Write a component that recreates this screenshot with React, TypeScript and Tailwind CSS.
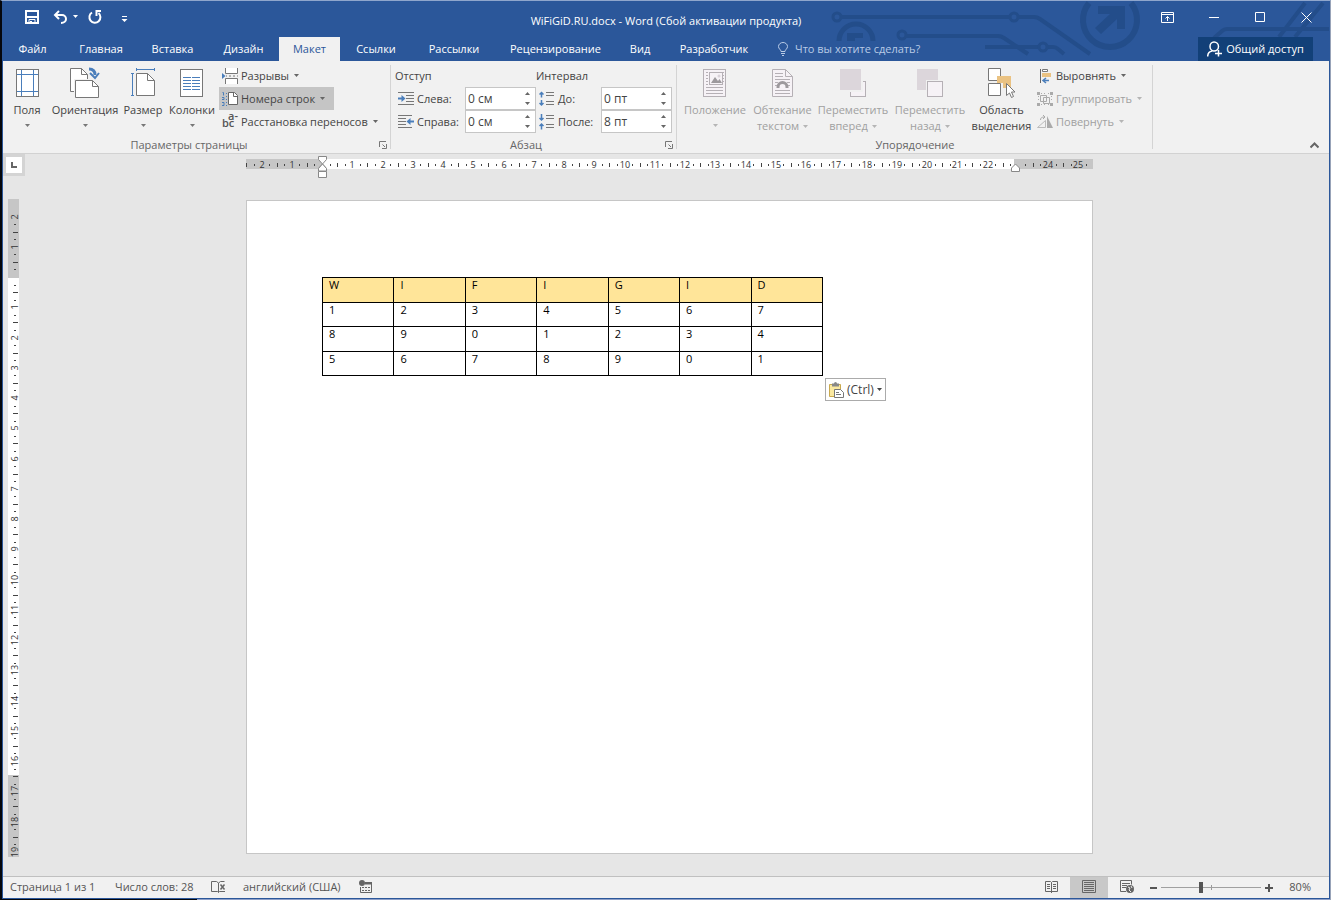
import { useState } from "react";
import type { ReactNode } from "react";
import clsx from "clsx";

const tabs = [
    { name: "Файл", width: "w-[59px] mr-[3px]" },
    { name: "Главная", width: "w-[72px]" },
    { name: "Вставка", width: "w-[71px]" },
    { name: "Дизайн", width: "w-[71px]" },
    { name: "Макет", width: "w-[61px]" },
    { name: "Ссылки", width: "w-[72px]" },
    { name: "Рассылки", width: "w-[84px]" },
    { name: "Рецензирование", width: "w-[119px]" },
    { name: "Вид", width: "w-[50px]" },
    { name: "Разработчик", width: "w-[98px]" },
];

const tableHead = ["W", "I", "F", "I", "G", "I", "D"];
const tableRows = [
    ["1", "2", "3", "4", "5", "6", "7"],
    ["8", "9", "0", "1", "2", "3", "4"],
    ["5", "6", "7", "8", "9", "0", "1"],
];

// Pixels per centimetre at 80% zoom
const CM = 30.25;

const Caret = ({ className }: { className?: string }) => (
    <svg className={clsx("shrink-0", className)} width="5" height="3" viewBox="0 0 5 3" fill="currentColor" aria-hidden="true">
        <path d="M0 0h5L2.5 3z" />
    </svg>
);

/* ---------- Large ribbon icons, 32x32 ---------- */

const BigIcon = ({ children }: { children: ReactNode }) => (
    <svg className="h-8 w-8 shrink-0" viewBox="0 0 32 32" fill="none" aria-hidden="true">{children}</svg>
);

const MarginsIcon = () => (
    <BigIcon>
        <rect x="5.500" y="3.500" width="22" height="27" fill="#fff" stroke="#777" />
        <path d="M10.500 4v26M22.500 4v26M6 8.500h21M6 25.500h21" stroke="#4a7ebb" />
    </BigIcon>
);

const OrientationIcon = () => (
    <BigIcon>
        <path d="M1.500 2.500h11l6 6v17h-17z" fill="#fff" stroke="#777" />
        <path d="M12.500 2.500v6h6" stroke="#777" />
        <path d="M5 13h27v19h-27z" fill="#f1f1f1" />
        <path d="M6.500 14.500h17l6 6v11h-23z" fill="#fff" stroke="#777" />
        <path d="M23.500 14.500v6h6" stroke="#777" />
        <path d="M20 3c4 0 6 2 6 6" stroke="#4a7ebb" strokeWidth="3" />
        <path d="M21 7l5 5 4-5" stroke="#4a7ebb" strokeWidth="2" />
    </BigIcon>
);

const SizeIcon = () => (
    <BigIcon>
        <path d="M9 3.500h19M9.500 2v3M27.500 2v3M5.500 7v22M4 7.500h3M4 29.500h3" stroke="#4a7ebb" />
        <path d="M9.500 7.500h11l7 7v15h-18z" fill="#fff" stroke="#777" />
        <path d="M20.500 7.500v7h7" stroke="#777" />
    </BigIcon>
);

const ColumnsIcon = () => (
    <BigIcon>
        <rect x="4.500" y="3.500" width="22" height="27" fill="#fff" stroke="#777" />
        <path d="M7 11.500h8M16 11.500h8M7 14.500h8M16 14.500h8M7 17.500h8M16 17.500h8M7 20.500h8M16 20.500h8M7 23.500h8M16 23.500h8" stroke="#4a7ebb" />
    </BigIcon>
);

const PositionIcon = () => (
    <BigIcon>
        <rect x="4.500" y="3.500" width="22" height="27" fill="#f6f2f6" stroke="#b5b0b5" />
        <path d="M7 6.500h2M7 9.500h2M7 12.500h2M7 15.500h2M7 18.500h2M22 18.500h2M22 6.500h3M22 9.500h3M22 12.500h3M22 15.500h3M7 21.500h17M7 24.500h17M7 27.500h17" stroke="#b5b0b5" />
        <rect x="10.500" y="6.500" width="13" height="12" fill="#f6f2f6" stroke="#b5b0b5" />
        <path d="M12 17l4-6 3 4 1.500-2 2.500 4z" fill="#9d999d" />
        <circle cx="20" cy="10" r="1.500" fill="#d9d2d9" />
    </BigIcon>
);

const WrapIcon = () => (
    <BigIcon>
        <path d="M5.500 3.500h13l7 7v20h-20z" fill="#f6f2f6" stroke="#b5b0b5" />
        <path d="M18.500 3.500v7h7" stroke="#b5b0b5" />
        <path d="M8 7.500h8M8 10.500h8M8 13.500h15M8 16.500h3M20 16.500h3M8 19.500h2M21 19.500h2M8 24.500h15M8 27.500h15" stroke="#b5b0b5" />
        <path d="M11 22v-1a4.500 4.500 0 0 1 9 0v1" stroke="#9d999d" strokeWidth="3" />
    </BigIcon>
);

const ForwardIcon = () => (
    <BigIcon>
        <rect x="13.500" y="15.500" width="15" height="15" fill="#f6f2f6" stroke="#b5b0b5" />
        <path d="M2 2h24v24h-24z" fill="#f1f1f1" />
        <path d="M3 3h21v21h-21z" fill="#dcd6db" />
    </BigIcon>
);

const BackwardIcon = () => (
    <BigIcon>
        <path d="M3 3h21v21h-21z" fill="#dcd6db" />
        <path d="M12 14h19v18h-19z" fill="#f1f1f1" />
        <rect x="13.500" y="15.500" width="15" height="15" fill="#f6f2f6" stroke="#b5b0b5" />
    </BigIcon>
);

const SelectionIcon = () => (
    <BigIcon>
        <path d="M11 10h14v12h-8v-5h-6z" fill="#eac282" />
        <path d="M2.500 2.500h12v12h-12z" fill="#fff" stroke="#777" />
        <path d="M11 10h4v6h-4z" fill="#eac282" />
        <path d="M2.500 17.500h12v12h-12z" fill="#fff" stroke="#777" />
        <path d="M20.500 17.500v12l3-2.500 2 4.500 2-1-2-4.500h3.500z" fill="#fff" stroke="#777" />
    </BigIcon>
);

/* ---------- Small ribbon icons, 16x16 ---------- */

const SmallIcon = ({ children }: { children: ReactNode }) => (
    <svg className="h-4 w-4 shrink-0" viewBox="0 0 16 16" fill="none" aria-hidden="true">{children}</svg>
);

const BreaksIcon = () => (
    <SmallIcon>
        <path d="M3.500 0v5.500h12v-5.500M3.500 16v-5.500h12v5.500" fill="#fff" stroke="#777" />
        <path d="M4 8h1M7 8h2M11 8h2M15 8h1" stroke="#777" />
        <path d="M0 5l3.500 3-3.500 3z" fill="#4a7ebb" />
    </SmallIcon>
);

const LineNumbersIcon = () => (
    <SmallIcon>
        <path d="M.5 1.500h1v3M0 6.500h2v2H0M0 11.500h2v3H0M4 2.500h1M4 5.500h1M4 8.500h1M4 11.500h1M4 14.500h1" stroke="#4a7ebb" />
        <path d="M6.500 1.500h6l3 3v9h-9z" fill="#fff" stroke="#666" />
        <path d="M11.500 1.500v4h4" stroke="#666" />
    </SmallIcon>
);

const HyphenIcon = () => (
    <svg className="h-4 w-4 shrink-0 overflow-visible fill-[#555] text-[11px] font-semibold" viewBox="0 0 16 16" aria-hidden="true">
        <text>
            <tspan x="6" y="6">a-</tspan>
            <tspan x="0" y="13">bc</tspan>
        </text>
    </svg>
);

const IndentLeftIcon = () => (
    <SmallIcon>
        <path d="M0 1.500h16M8 4.500h8M8 7.500h8M8 10.500h8M0 13.500h16" stroke="#777" />
        <path d="M0 7.500h5" stroke="#4a7ebb" strokeWidth="2" />
        <path d="M3.500 4l4 3.500-4 3.500z" fill="#4a7ebb" />
    </SmallIcon>
);

const IndentRightIcon = () => (
    <SmallIcon>
        <path d="M0 1.500h14M0 4.500h8M0 7.500h8M0 10.500h8M0 13.500h14" stroke="#777" />
        <path d="M11 7.500h5" stroke="#4a7ebb" strokeWidth="2" />
        <path d="M12.500 4l-4 3.500 4 3.500z" fill="#4a7ebb" />
    </SmallIcon>
);

const SpacingBeforeIcon = () => (
    <SmallIcon>
        <path d="M7 1.500h8M7 4.500h8M7 10.500h8M7 13.500h8" stroke="#777" />
        <path d="M2.500 6.500V1M.5 3.500l2-2 2 2M2.500 9v5M.5 12l2 2 2-2" stroke="#4a7ebb" strokeWidth="1.500" />
    </SmallIcon>
);

const SpacingAfterIcon = () => (
    <SmallIcon>
        <path d="M7 1.500h8M7 4.500h8M7 10.500h8M7 13.500h8" stroke="#777" />
        <path d="M2.500 0v5.500M.5 4l2 2 2-2M2.500 15.500V10M.5 12l2-2 2 2" stroke="#4a7ebb" strokeWidth="1.500" />
    </SmallIcon>
);

const AlignIcon = () => (
    <SmallIcon>
        <path d="M3.500 1v14" stroke="#666" />
        <path d="M5.500 1.500h5v2h-5z" fill="#fff" stroke="#777" />
        <path d="M5 5h9v4H5z" fill="#eac282" />
        <path d="M6 12.500h6M9 10l-3 2.500 3 2.500" stroke="#4a7ebb" strokeWidth="1.500" />
    </SmallIcon>
);

const GroupIcon = () => (
    <SmallIcon>
        <path d="M3.500 4.500h6v6h-6zM6.500 6.500h6v6h-6z" stroke="#aaa" />
        <path d="M0 1h3v3H0zM13 1h3v3h-3zM0 12h3v3H0zM13 12h3v3h-3z" fill="#aaa" />
        <path d="M4 2.500h1M7 2.500h1M11 2.500h1M4 13.500h1M7 13.500h1M11 13.500h1M1.500 5v1M1.500 8v1M14.500 5v1M14.500 8v1" stroke="#aaa" />
    </SmallIcon>
);

const RotateIcon = () => (
    <SmallIcon>
        <path d="M.5 13.500h8v-7z" stroke="#bbb" />
        <path d="M10 14V2l6 12z" fill="#aaa" />
        <path d="M3.500 6c0-2 1-3 4-3M6 1l2 2-2 2" stroke="#aaa" />
    </SmallIcon>
);

/* ---------- Ribbon building blocks ---------- */

type LargeButtonProps = {
    icon: ReactNode;
    lines: string[];
    width: string;
    caret?: "inline" | "below";
    disabled?: boolean;
};

const LargeButton = ({ icon, lines, width, caret, disabled }: LargeButtonProps) => (
    <button
        type="button"
        disabled={disabled}
        className={clsx("flex shrink-0 flex-col items-center pt-[5px] whitespace-nowrap", width, disabled ? "text-[#a0a0a0]" : "text-[#444]")}
    >
        {icon}
        <span className="mt-1 flex flex-col items-center leading-4">
            {lines.map((line, i) => (
                <span key={line} className="flex items-center gap-1">
                    {line}
                    {caret === "inline" && i === lines.length - 1 && <Caret className="text-[#b5b5b5]" />}
                </span>
            ))}
        </span>
        {caret === "below" && <Caret className={clsx("mt-[6px]", disabled ? "text-[#b5b5b5]" : "text-[#777]")} />}
    </button>
);

type SmallButtonProps = { icon: ReactNode; label: string; active?: boolean; disabled?: boolean };

const SmallButton = ({ icon, label, active, disabled }: SmallButtonProps) => (
    <button
        type="button"
        disabled={disabled}
        aria-pressed={active}
        className={clsx(
            "flex h-[23px] items-center gap-[3px] pr-[7px] pl-[3px] whitespace-nowrap",
            active && "w-[115px] bg-[#c5c5c5]",
            disabled ? "text-[#a0a0a0]" : "text-[#444]"
        )}
    >
        {icon}
        {label}
        <Caret className={clsx("ml-[2px]", disabled ? "text-[#b5b5b5]" : "text-[#666]")} />
    </button>
);

const SpinField = ({ id, icon, label, initial, unit, labelWidth }: {
    id: string; icon: ReactNode; label: string; initial: number; unit: string; labelWidth: string;
}) => {
    const [value, setValue] = useState(initial);

    return (
        <div className="flex h-[23px] items-center gap-[3px] text-[#444]">
            {icon}
            <label htmlFor={id} className={clsx("whitespace-nowrap", labelWidth)}>{label}</label>
            <div className="flex h-[23px] w-[71px] border border-[#c6c6c6] bg-white">
                <input id={id} className="w-[55px] pl-[2px] text-[12px] outline-none" value={`${value} ${unit}`} readOnly />
                <div className="flex flex-col justify-center gap-[1px] text-[#666]">
                    <button type="button" aria-label="Больше" className="flex h-[9px] w-[12px] items-center justify-center" onClick={() => setValue(value + 1)}>
                        <Caret className="rotate-180" />
                    </button>
                    <button type="button" aria-label="Меньше" className="flex h-[9px] w-[12px] items-center justify-center" onClick={() => setValue(Math.max(0, value - 1))}>
                        <Caret />
                    </button>
                </div>
            </div>
        </div>
    );
};

const Launcher = ({ label }: { label: string }) => (
    <button type="button" aria-label={label} className="flex h-4 w-4 items-center justify-center">
        <svg width="8" height="8" viewBox="0 0 8 8" fill="none" stroke="#777" aria-hidden="true">
            <path d="M.5 6V.5H7M3.500 3.500L6 6M7.500 3v4.500H3" />
        </svg>
    </button>
);

const RibbonGroup = ({ title, width, launcher, children }: {
    title: string; width: string; launcher?: boolean; children: ReactNode;
}) => (
    <section aria-label={title} className={clsx("relative flex shrink-0 flex-col after:absolute after:top-1 after:right-0 after:h-[84px] after:w-px after:bg-[#d4d4d4]", width)}>
        <div className="flex h-[76px] items-start">{children}</div>
        <div className="flex h-4 items-center text-[#666]">
            <span className="flex-1 text-center">{title}</span>
            {launcher && <Launcher label={title} />}
        </div>
    </section>
);

/* ---------- Title bar ---------- */

const Circuit = () => (
    <svg className="pointer-events-none absolute top-0 right-0 h-[60px] w-[510px]" viewBox="0 0 510 60" fill="none" stroke="#234d8a" strokeWidth="4" aria-hidden="true">
        <circle cx="18" cy="16" r="4" strokeWidth="3" />
        <circle cx="195" cy="16" r="4" strokeWidth="3" />
        <path d="M22 16h169M199 16h16q3 0 6 2l50 35" />
        <path d="M20 40a17 17 0 0 1 34 0" strokeWidth="5" />
        <path d="M28 40v-8h16v5h-8v3z" fill="#234d8a" stroke="none" />
        <circle cx="83" cy="34" r="4" strokeWidth="3" />
        <path d="M87 35h92q3 0 6 2l24 16" />
        <path d="M166 46h54M228 46h6q3 0 5 2l6 5" />
        <circle cx="224" cy="46" r="4" strokeWidth="3" />
        <path d="M270 2a27 27 0 1 0 42 0" strokeWidth="6" />
        <path d="M279 5h27v23h-8V18L282 33l-6-6 15-14h-12z" fill="#234d8a" stroke="none" />
        <path d="M395 37l8-7q2-2 5-2h102M486 2l-26 34M504 2l-28 34" />
    </svg>
);

const TitleBar = () => (
    <div className="relative flex h-[36px] items-center justify-between">
        <div className="flex items-center pb-[5px] pl-[22px]">
            <button type="button" aria-label="Сохранить" className="flex w-[28px]">
                <svg width="14" height="14" viewBox="0 0 14 14" fill="none" stroke="#fff" strokeWidth="2" aria-hidden="true">
                    <path d="M1 1h12v12H1zM1 7h12" />
                    <path d="M4 13v-3.500h6v3.500" strokeWidth="1" />
                    <path d="M5 11h2v2H5z" fill="#fff" stroke="none" />
                </svg>
            </button>
            <button type="button" aria-label="Отменить" className="flex items-center gap-[5px]">
                <svg width="15" height="14" viewBox="0 0 15 14" fill="none" stroke="#fff" strokeWidth="2" aria-hidden="true">
                    <path d="M2 5h7a4 4 0 0 1 4 4c0 2-2 4-5 4M6 1L2 5l4 4" />
                </svg>
                <Caret className="text-white" />
            </button>
            <button type="button" aria-label="Повторить" className="ml-[10px] flex w-[33px]">
                <svg width="14" height="14" viewBox="0 0 14 14" fill="none" stroke="#fff" strokeWidth="2" aria-hidden="true">
                    <path d="M4 2.500A5.500 5.500 0 1 0 10.500 3" />
                    <path d="M13 1H8.500v5" />
                </svg>
            </button>
            <button type="button" aria-label="Настройка панели быстрого доступа" className="flex pt-[5px]">
                <svg width="7" height="7" viewBox="0 0 7 7" fill="#fff" aria-hidden="true">
                    <path d="M1 0h5v1H1zM.5 3h6l-3 3z" />
                </svg>
            </button>
        </div>
        <h1 className="absolute left-1/2 mt-1 -translate-x-1/2 whitespace-nowrap">WiFiGiD.RU.docx - Word (Сбой активации продукта)</h1>
        <div className="relative flex h-[32px] self-start text-white">
            <button type="button" aria-label="Параметры отображения ленты" className="flex w-[47px] items-center justify-center">
                <svg width="13" height="11" viewBox="0 0 13 11" fill="none" stroke="currentColor" aria-hidden="true">
                    <path d="M.5.5h12v10H.5zM.5 2.500h12M6.500 9V4.500M4.500 6.500l2-2 2 2" />
                </svg>
            </button>
            <button type="button" aria-label="Свернуть" className="flex w-[46px] items-center justify-center">
                <svg width="10" height="11" viewBox="0 0 10 11" stroke="currentColor" aria-hidden="true"><path d="M0 5.500h10" /></svg>
            </button>
            <button type="button" aria-label="Развернуть" className="flex w-[46px] items-center justify-center">
                <svg width="10" height="10" viewBox="0 0 10 10" fill="none" stroke="currentColor" aria-hidden="true"><path d="M.5.5h9v9h-9z" /></svg>
            </button>
            <button type="button" aria-label="Закрыть" className="flex w-[46px] items-center justify-center">
                <svg width="11" height="11" viewBox="0 0 11 11" stroke="currentColor" aria-hidden="true"><path d="M.5.5l10 10M10.500.5l-10 10" /></svg>
            </button>
        </div>
    </div>
);

const TabStrip = () => {
    const [current, setCurrent] = useState("Макет");

    return (
        <nav className="relative flex h-[24px] items-stretch">
            {tabs.map((tab) => (
                <button
                    key={tab.name}
                    type="button"
                    onClick={() => setCurrent(tab.name)}
                    className={clsx("shrink-0 whitespace-nowrap", tab.width, current === tab.name ? "bg-[#f1f1f1] text-[#2b579a]" : "text-white")}
                >
                    {tab.name}
                </button>
            ))}
            <button type="button" className="ml-[15px] flex items-center gap-[7px] whitespace-nowrap text-[#b9cbe6]">
                <svg width="10" height="14" viewBox="0 0 10 14" fill="none" stroke="currentColor" aria-hidden="true">
                    <path d="M3 9.500c0-2-2.500-2.500-2.500-5a4.500 4 0 0 1 9 0c0 2.500-2.500 3-2.500 5zM3 11.500h4M4 13.500h2" />
                </svg>
                Что вы хотите сделать?
            </button>
            <button type="button" className="mr-[16px] ml-auto flex w-[115px] items-center justify-center gap-1 bg-[#124078] whitespace-nowrap text-white">
                <svg width="15" height="16" viewBox="0 0 15 16" fill="none" stroke="currentColor" strokeWidth="1.500" aria-hidden="true">
                    <path d="M7 1a4 4 0 1 1 0 9 4 4.500 0 0 1 0-9zM.7 15.500c0-3 2-5 4.300-5.500M11.500 9v6.500M8 12.500h7" />
                </svg>
                Общий доступ
            </button>
        </nav>
    );
};

/* ---------- Ribbon ---------- */

const Ribbon = () => (
    <div className="relative flex h-[93px] shrink-0 border-b border-[#d2d2d2] bg-[#f1f1f1]">
        <RibbonGroup title="Параметры страницы" width="w-[388px]" launcher>
            <LargeButton icon={<MarginsIcon />} lines={["Поля"]} width="w-[48px]" caret="below" />
            <LargeButton icon={<OrientationIcon />} lines={["Ориентация"]} width="w-[68px]" caret="below" />
            <LargeButton icon={<SizeIcon />} lines={["Размер"]} width="w-[48px]" caret="below" />
            <LargeButton icon={<ColumnsIcon />} lines={["Колонки"]} width="w-[50px]" caret="below" />
            <div className="ml-[2px] flex flex-col items-start pt-[3px]">
                <SmallButton icon={<BreaksIcon />} label="Разрывы" />
                <SmallButton icon={<LineNumbersIcon />} label="Номера строк" active />
                <SmallButton icon={<HyphenIcon />} label="Расстановка переносов" />
            </div>
        </RibbonGroup>

        <RibbonGroup title="Абзац" width="w-[286px]" launcher>
            <div className="ml-[4px] w-[141px] pt-[3px]">
                <div className="flex h-[23px] items-center text-[#444]">Отступ</div>
                <div className="pl-[3px]">
                    <SpinField id="indent-left" icon={<IndentLeftIcon />} label="Слева:" initial={0} unit="см" labelWidth="w-[45px]" />
                    <SpinField id="indent-right" icon={<IndentRightIcon />} label="Справа:" initial={0} unit="см" labelWidth="w-[45px]" />
                </div>
            </div>
            <div className="pt-[3px]">
                <div className="flex h-[23px] items-center text-[#444]">Интервал</div>
                <div className="pl-[3px]">
                    <SpinField id="space-before" icon={<SpacingBeforeIcon />} label="До:" initial={0} unit="пт" labelWidth="w-[40px]" />
                    <SpinField id="space-after" icon={<SpacingAfterIcon />} label="После:" initial={8} unit="пт" labelWidth="w-[40px]" />
                </div>
            </div>
        </RibbonGroup>

        <RibbonGroup title="Упорядочение" width="w-[476px]">
            <LargeButton icon={<PositionIcon />} lines={["Положение"]} width="ml-[3px] w-[70px]" caret="below" disabled />
            <LargeButton icon={<WrapIcon />} lines={["Обтекание", "текстом"]} width="w-[65px]" caret="inline" disabled />
            <LargeButton icon={<ForwardIcon />} lines={["Переместить", "вперед"]} width="w-[76px]" caret="inline" disabled />
            <LargeButton icon={<BackwardIcon />} lines={["Переместить", "назад"]} width="w-[78px]" caret="inline" disabled />
            <LargeButton icon={<SelectionIcon />} lines={["Область", "выделения"]} width="w-[65px]" />
            <div className="flex flex-col items-start pt-[3px]">
                <SmallButton icon={<AlignIcon />} label="Выровнять" />
                <SmallButton icon={<GroupIcon />} label="Группировать" disabled />
                <SmallButton icon={<RotateIcon />} label="Повернуть" disabled />
            </div>
        </RibbonGroup>

        <button type="button" aria-label="Свернуть ленту" className="mr-[10px] mb-[3px] ml-auto self-end">
            <svg width="9" height="9" viewBox="0 0 9 9" fill="none" stroke="#666" strokeWidth="2" aria-hidden="true">
                <path d="M.5 6.500l4-4 4 4" />
            </svg>
        </button>
    </div>
);

/* ---------- Rulers ---------- */

// Marks between two limits, in quarters of a centimetre from the zero point
const rulerMarks = (from: number, to: number) => {
    const marks = [];
    for (let q = from; q <= to; q++) {
        if (q !== 0) marks.push(q);
    }
    return marks;
};

const HorizontalRuler = () => (
    <svg className="h-6 w-[847px] shrink-0" viewBox="0 0 847 24" aria-label="Горизонтальная линейка">
        <path d="M0 3h847v10H0z" fill="#c6c6c6" />
        <path d="M76 3h692v10H76z" fill="#fff" />
        {rulerMarks(-10, 101).filter((q) => q !== 92).map((q) => {
            const x = Math.round(76 + (q * CM) / 4);
            if (q % 4 === 0) {
                return <text key={q} x={x} y="12" textAnchor="middle" className="fill-[#333] text-[9px]">{Math.abs(q / 4)}</text>;
            }
            return q % 2 === 0
                ? <path key={q} d={`M${x} 7h1v4h-1z`} fill="#444" />
                : <path key={q} d={`M${x} 8h1v2h-1z`} fill="#444" />;
        })}
        <path d="M72.500.5h8v3l-4 4.500 4 4.500h-8l4-4.500-4-4.500zM72.500 15.500h8v6h-8z" fill="#fff" stroke="#888" />
        <path d="M72.500 15v-2.500L76.500 8l4 4.500v2.500z" fill="#fff" stroke="#888" />
        <path d="M765.500 15.500v-3.500l4-4 4 4v3.500z" fill="#fff" stroke="#888" />
    </svg>
);

const VerticalRuler = () => (
    <svg className="h-[658px] w-[11px] shrink-0 overflow-visible" viewBox="0 0 11 658" aria-label="Вертикальная линейка">
        <path d="M0 0h11v658H0z" fill="#c6c6c6" />
        <path d="M0 79h11v497H0z" fill="#fff" />
        {rulerMarks(-8, 76).map((q) => {
            const y = Math.round(78 + (q * CM) / 4);
            if (q % 4 === 0) {
                return (
                    <text key={q} x="10" y={y} textAnchor="middle" transform={`rotate(-90 10 ${y})`} className="fill-[#333] text-[9px]">
                        {Math.abs(q / 4)}
                    </text>
                );
            }
            return q % 2 === 0
                ? <path key={q} d={`M5 ${y}h5v1H5z`} fill="#444" />
                : <path key={q} d={`M6 ${y}h2v1H6z`} fill="#444" />;
        })}
    </svg>
);

/* ---------- Document ---------- */

const Page = () => (
    <main className="mb-[22px] w-[847px] max-w-full flex-1 border border-[#c6c6c6] bg-white pt-[76px] pl-[75px]">
        <table className="w-[501px] table-fixed border-collapse text-[11px] leading-[14px] text-black">
            <thead>
                <tr className="h-[25px] bg-[#ffe599]">
                    {tableHead.map((cell, i) => (
                        <th key={i} className="border border-black px-[6px] text-left align-top font-normal">{cell}</th>
                    ))}
                </tr>
            </thead>
            <tbody>
                {tableRows.map((row, r) => (
                    <tr key={r} className="h-[24px] even:h-[25px]">
                        {row.map((cell, i) => (
                            <td key={i} className="border border-black px-[6px] align-top">{cell}</td>
                        ))}
                    </tr>
                ))}
            </tbody>
        </table>
        <button type="button" className="mt-[2px] ml-[503px] flex h-[23px] w-[61px] items-center gap-[3px] border border-[#ababab] bg-white pl-[3px] text-[12px] text-[#444]">
            <svg width="15" height="16" viewBox="0 0 15 16" fill="none" aria-hidden="true">
                <path d="M.5 2.500h11v12H.5z" fill="#fbe9a0" stroke="#c9a94e" />
                <path d="M3 1.500h2a1.500 1.500 0 0 1 3 0h2v3H3z" fill="#888" />
                <path d="M5.500 7.500h6l3 3v5h-9z" fill="#fff" stroke="#777" />
                <path d="M7 10.500h3M7 12.500h5" stroke="#777" />
            </svg>
            (Ctrl)
            <Caret />
        </button>
    </main>
);

/* ---------- Status bar ---------- */

const StatusBar = () => {
    const [zoom, setZoom] = useState(40);

    return (
        <footer className="flex h-[22px] shrink-0 items-stretch border-t border-[#c0c0c0] bg-[#f1f1f1] whitespace-nowrap text-[#555]">
            <button type="button" className="w-[112px] pb-[2px] pl-[7px] text-left">Страница 1 из 1</button>
            <button type="button" className="w-[96px] pb-[2px] text-left">Число слов: 28</button>
            <button type="button" aria-label="Правописание" className="flex w-[32px] items-center pb-[2px]">
                <svg width="15" height="13" viewBox="0 0 15 13" fill="none" stroke="#666" aria-hidden="true">
                    <path d="M7.500 12.500l-1-1h-6v-10h5l2 1.500v9.500l1-1h5.500M7.500 3l2-1.500h4" />
                    <path d="M9.500 4.500l4 5M13.500 4.500l-4 5" strokeWidth="1.500" />
                </svg>
            </button>
            <button type="button" className="w-[116px] pb-[2px] text-left">английский (США)</button>
            <button type="button" aria-label="Запись макроса" className="flex items-center pb-[2px]">
                <svg width="13" height="13" viewBox="0 0 13 13" fill="none" stroke="#666" aria-hidden="true">
                    <path d="M12.500 2v10.500H1.500V7M6 2.500h7" />
                    <path d="M6 3.500h6" strokeWidth="2" />
                    <path d="M3 7.500h2M6 7.500h2M9 7.500h2M3 10.500h2M6 10.500h2M9 10.500h2" />
                    <circle cx="3" cy="3" r="3" fill="#666" stroke="none" />
                </svg>
            </button>

            <div className="mr-[18px] ml-auto flex items-stretch">
                <button type="button" aria-label="Режим чтения" className="flex w-[38px] items-center justify-center pb-[2px]">
                    <svg width="13" height="12" viewBox="0 0 13 12" fill="none" stroke="#666" aria-hidden="true">
                        <path d="M6.500 12V1.500M6 10.500H.5v-10h5l1 1 1-1h5v10H7M2 3.500h3M2 5.500h3M2 7.500h3M8 3.500h3M8 5.500h3M8 7.500h3" />
                    </svg>
                </button>
                <button type="button" aria-label="Разметка страницы" className="flex w-[38px] items-center justify-center bg-[#c8c8c8] pb-[2px]">
                    <svg width="14" height="13" viewBox="0 0 14 13" fill="none" stroke="#666" aria-hidden="true">
                        <path d="M.5.500h13v12H.5zM2 2.500h10M2 4.500h10M2 6.500h10M2 8.500h10M2 10.500h10" />
                    </svg>
                </button>
                <button type="button" aria-label="Веб-документ" className="flex w-[38px] items-center justify-center pb-[2px]">
                    <svg width="14" height="13" viewBox="0 0 14 13" fill="none" stroke="#666" aria-hidden="true">
                        <path d="M6 11.500H.5V.5h11v4M2 3.500h8M2 5.500h5M2 7.500h4" />
                        <circle cx="10" cy="9" r="4" fill="#666" stroke="none" />
                        <path d="M8 7l2 1-1 2 2 2M11 6l1 2" stroke="#eee" />
                    </svg>
                </button>
                <button type="button" aria-label="Уменьшить" className="flex w-[15px] items-center" onClick={() => setZoom(Math.max(0, zoom - 5))}>
                    <svg width="7" height="2" viewBox="0 0 7 2" className="ml-1" aria-hidden="true"><path d="M0 0h7v2H0z" fill="#555" /></svg>
                </button>
                <div className="relative flex items-center pb-px">
                    <span className="absolute left-[50px] h-[5px] w-px bg-[#999]" />
                    <input
                        type="range"
                        aria-label="Масштаб"
                        min={0}
                        max={100}
                        value={zoom}
                        onChange={(e) => setZoom(Number(e.target.value))}
                        className="relative h-[11px] w-[100px] appearance-none bg-transparent [&::-webkit-slider-runnable-track]:h-px [&::-webkit-slider-runnable-track]:bg-[#a0a0a0] [&::-webkit-slider-thumb]:-mt-[5px] [&::-webkit-slider-thumb]:h-[11px] [&::-webkit-slider-thumb]:w-[4px] [&::-webkit-slider-thumb]:appearance-none [&::-webkit-slider-thumb]:bg-[#555]"
                    />
                </div>
                <button type="button" aria-label="Увеличить" className="ml-[4px] flex items-center" onClick={() => setZoom(Math.min(100, zoom + 5))}>
                    <svg width="8" height="8" viewBox="0 0 8 8" aria-hidden="true"><path d="M3 0h2v3h3v2H5v3H3V5H0V3h3z" fill="#555" /></svg>
                </button>
                <button type="button" className="w-[38px] pb-[2px] text-right">80%</button>
            </div>
        </footer>
    );
};

export default function App() {
    return (
        <div className="flex min-h-screen flex-col border-t border-r border-l-2 border-t-[#8fa6cc] border-r-[#98a3b8] border-l-[#05070c] font-['Open_Sans','Noto_Sans',sans-serif] text-[11px] leading-4">
            <div className="flex flex-1 flex-col border-x border-b border-[#2b579a] bg-[#e6e6e6]">
                <header className="relative shrink-0 bg-[#2b579a] text-white">
                    <Circuit />
                    <TitleBar />
                    <TabStrip />
                </header>
                <Ribbon />

                <div className="flex flex-1 pr-[15px]">
                    <div className="flex w-[22px] shrink-0 flex-col">
                        <button type="button" aria-label="Табуляция" className="flex h-[22px] w-[22px] items-center justify-center border-[3px] border-[#d4d4d4] bg-white">
                            <svg width="6" height="6" viewBox="0 0 6 6" fill="none" stroke="#666" strokeWidth="2" aria-hidden="true"><path d="M1 0v5h5" /></svg>
                        </button>
                        <div className="mt-[23px] ml-[5px] flex">
                            <VerticalRuler />
                        </div>
                    </div>
                    <div className="flex min-w-0 flex-1 flex-col items-center pt-[2px]">
                        <HorizontalRuler />
                        <div className="h-5 shrink-0" />
                        <Page />
                    </div>
                </div>

                <StatusBar />
            </div>
            <div className="flex h-px bg-[#8fa0c8]">
                <div className="w-[195px] bg-[#05070c]" />
            </div>
        </div>
    );
}
